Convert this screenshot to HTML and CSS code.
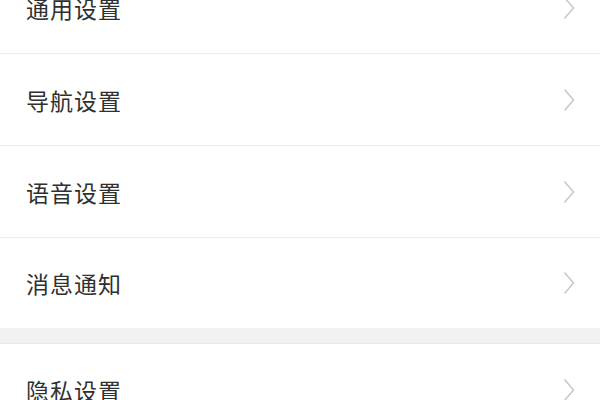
FILE: index.html
```html
<!DOCTYPE html>
<html lang="zh-CN">
<head>
<meta charset="utf-8">
<link rel="stylesheet" href="styles.css">
</head>
<body>
<div class="page">
  <div class="group first">
    <div class="row"><span class="label">通用设置</span><svg class="chev" viewBox="0 0 12 24"><path d="M1.5 1.5 L10.5 12 L1.5 22.5"/></svg></div>
    <div class="row"><span class="label">导航设置</span><svg class="chev" viewBox="0 0 12 24"><path d="M1.5 1.5 L10.5 12 L1.5 22.5"/></svg></div>
    <div class="row"><span class="label">语音设置</span><svg class="chev" viewBox="0 0 12 24"><path d="M1.5 1.5 L10.5 12 L1.5 22.5"/></svg></div>
    <div class="row last"><span class="label">消息通知</span><svg class="chev" viewBox="0 0 12 24"><path d="M1.5 1.5 L10.5 12 L1.5 22.5"/></svg></div>
  </div>
  <div class="gap"></div>
  <div class="group">
    <div class="row"><span class="label">隐私设置</span><svg class="chev" viewBox="0 0 12 24"><path d="M1.5 1.5 L10.5 12 L1.5 22.5"/></svg></div>
  </div>
</div>
</body>
</html>
```
FILE: styles.css
```css
html, body {
  margin: 0;
  padding: 0;
  background: #ffffff;
  overflow: hidden;
}
.page {
  width: 600px;
  height: 400px;
  overflow: hidden;
  font-family: "Noto Sans CJK SC", "Noto Sans", sans-serif;
}
.group.first {
  margin-top: -38px;
}
.row {
  height: 92px;
  box-sizing: border-box;
  border-bottom: 1px solid #ececec;
  display: flex;
  align-items: center;
  justify-content: space-between;
  padding: 0 23px 0 26px;
}
.row.last {
  height: 90px;
  border-bottom: none;
}
.label {
  font-size: 23px;
  color: #303030;
  letter-spacing: 1px;
}
.chev {
  width: 12px;
  height: 24px;
  fill: none;
  stroke: #c9c9c9;
  stroke-width: 1.6;
  margin-right: 2px;
}
.gap {
  height: 16px;
  background: #f2f2f2;
  border-bottom: 1px solid #e9e9e9;
  box-sizing: border-box;
}
```
